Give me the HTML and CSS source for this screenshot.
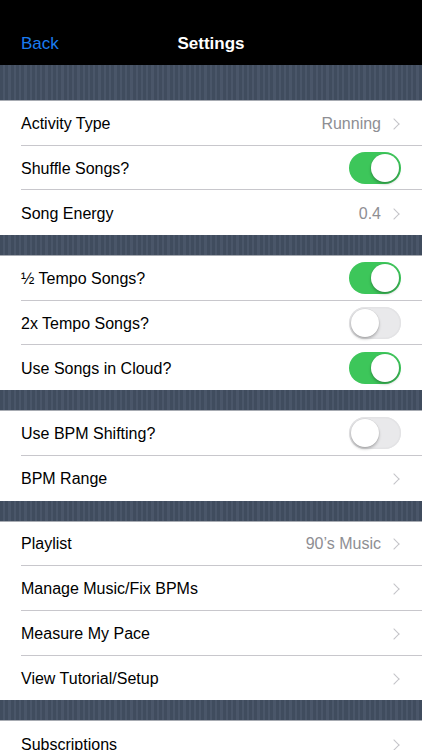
FILE: index.html
```html
<!DOCTYPE html>
<html lang="en">
<head>
    <meta charset="UTF-8">
    <meta name="viewport" content="width=device-width, initial-scale=1.0">
    <title>Settings</title>
    <link rel="stylesheet" href="styles.css">
</head>
<body>

    <!-- Navigation Bar -->
    <div class="navbar">
        <span class="back">Back</span>
        <span class="title">Settings</span>
    </div>

    <!-- Section 1 -->
    <div class="stripe first"></div>
    <div class="group">
        <div class="row">
            <span class="label">Activity Type</span>
            <span class="detail">Running</span>
            <span class="chevron"></span>
        </div>
        <div class="row">
            <span class="label">Shuffle Songs?</span>
            <span class="switch on"></span>
        </div>
        <div class="row">
            <span class="label">Song Energy</span>
            <span class="detail">0.4</span>
            <span class="chevron"></span>
        </div>
    </div>

    <!-- Section 2 -->
    <div class="stripe"></div>
    <div class="group">
        <div class="row">
            <span class="label">½ Tempo Songs?</span>
            <span class="switch on"></span>
        </div>
        <div class="row">
            <span class="label">2x Tempo Songs?</span>
            <span class="switch"></span>
        </div>
        <div class="row">
            <span class="label">Use Songs in Cloud?</span>
            <span class="switch on"></span>
        </div>
    </div>

    <!-- Section 3 -->
    <div class="stripe"></div>
    <div class="group">
        <div class="row">
            <span class="label">Use BPM Shifting?</span>
            <span class="switch"></span>
        </div>
        <div class="row">
            <span class="label">BPM Range</span>
            <span class="chevron"></span>
        </div>
    </div>

    <!-- Section 4 -->
    <div class="stripe"></div>
    <div class="group">
        <div class="row">
            <span class="label">Playlist</span>
            <span class="detail">90’s Music</span>
            <span class="chevron"></span>
        </div>
        <div class="row">
            <span class="label">Manage Music/Fix BPMs</span>
            <span class="chevron"></span>
        </div>
        <div class="row">
            <span class="label">Measure My Pace</span>
            <span class="chevron"></span>
        </div>
        <div class="row">
            <span class="label">View Tutorial/Setup</span>
            <span class="chevron"></span>
        </div>
    </div>

    <!-- Section 5 -->
    <div class="stripe"></div>
    <div class="group">
        <div class="row">
            <span class="label">Subscriptions</span>
            <span class="chevron"></span>
        </div>
    </div>

</body>
</html>
```

FILE: styles.css
```css
/* General Styling for Body */
body {
    font-family: 'Liberation Sans', Arial, sans-serif;
    background-color: #ffffff;
    margin: 0;
    width: 422px;
    height: 750px;
    overflow: hidden;
}

/* Navigation Bar */
.navbar {
    height: 43px;
    padding-top: 22px;
    background-color: #000;
    display: flex;
    align-items: center;
    position: relative;
    font-size: 17px;
}

.navbar .back {
    color: #1a7cf0;
    margin-left: 21px;
}

.navbar .title {
    color: #fff;
    font-weight: bold;
    position: absolute;
    left: 0;
    right: 0;
    text-align: center;
    pointer-events: none;
}

/* Pinstripe Section Separators */
.stripe {
    height: 21px;
    background-color: #414d5f;
    background-image: repeating-linear-gradient(90deg,
        #404c5e 0px, #404c5e 3px,
        #4a5669 3px, #4a5669 5.3px);
    border-bottom: 1px solid #a7abb2;
    box-sizing: border-box;
}

.stripe.first {
    height: 36px;
}

/* Table Rows */
.group {
    background-color: #fff;
}

.row {
    height: 44.7px;
    display: flex;
    align-items: center;
    padding-top: 2px;
    padding-right: 21px;
    margin-left: 21px;
    box-sizing: border-box;
    border-bottom: 1px solid #c8c7cc;
    font-size: 16px;
    color: #000;
}

.row:last-child {
    border-bottom: none;
}

.row .label {
    flex: 1;
}

.row .detail {
    color: #8e8e93;
    margin-right: 9px;
}

/* Disclosure Chevron */
.chevron {
    width: 7px;
    height: 7px;
    border-top: 1.5px solid #c4c4c8;
    border-right: 1.5px solid #c4c4c8;
    transform: rotate(45deg);
    margin-right: 3px;
}

/* Toggle Switch */
.switch {
    width: 52px;
    height: 32px;
    margin-top: -2px;
    border-radius: 16px;
    background-color: #e9e9eb;
    box-shadow: inset 0 0 0 1.5px #e3e3e5;
    position: relative;
    box-sizing: border-box;
}

.switch::after {
    content: '';
    position: absolute;
    top: 2px;
    left: 2px;
    width: 28px;
    height: 28px;
    border-radius: 50%;
    background-color: #fff;
    box-shadow: 0 2px 3px rgba(0, 0, 0, 0.25), 0 0 0 0.5px rgba(0, 0, 0, 0.08);
}

.switch.on {
    background-color: #3dc65a;
    box-shadow: none;
}

.switch.on::after {
    left: 22px;
}
```
